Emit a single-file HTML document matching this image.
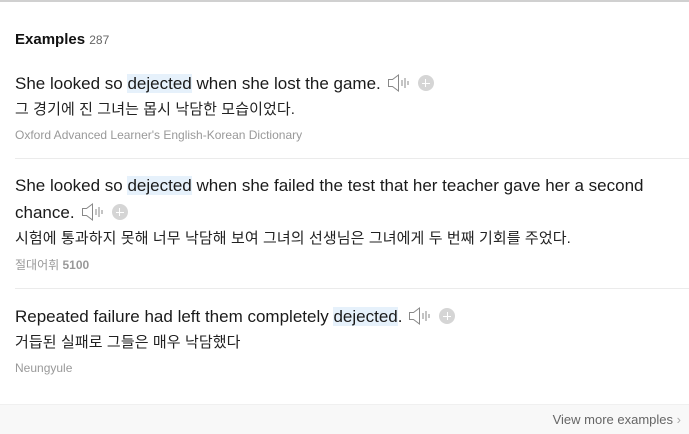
<!DOCTYPE html>
<html><head><meta charset="utf-8"><style>
*{margin:0;padding:0;box-sizing:border-box}
body{width:689px;height:434px;background:#fff;position:relative;overflow:hidden;font-family:"Liberation Sans","Noto Sans CJK KR",sans-serif;color:#111}
.t{position:absolute;left:15px;white-space:nowrap}
.en{font-size:17px;line-height:20px;color:#1a1a1a}
.ko{font-size:15px;line-height:20px;color:#222;letter-spacing:0.1px}
.src{font-size:12px;line-height:16px;color:#999}
.hl{background:#e6f1fb}
.hr{position:absolute;left:15px;right:0;height:1px;background:#ebebeb}
.ic{display:inline-block;vertical-align:-3px;margin-left:5px}
.plus{display:inline-block;width:16px;height:16px;border-radius:50%;background:#d5d5d5;vertical-align:-2px;margin-left:8px;position:relative}
.plus:before{content:"";position:absolute;left:4px;top:7.5px;width:8px;height:1px;background:#fff}
.plus:after{content:"";position:absolute;left:7.5px;top:4px;width:1px;height:8px;background:#fff}
</style></head><body>
<div style="position:absolute;left:0;right:0;top:0;height:2px;background:#d0d0d0"></div>
<div class="t" style="top:31px;font-size:15px;line-height:18px;font-weight:bold;color:#111">Examples <span style="font-weight:normal;font-size:12px;color:#666">287</span></div>

<div class="t en" style="top:74px">She looked so <span class="hl">dejected</span> when she lost the game.<svg class="ic" width="24" height="18" viewBox="0 0 24 18"><path d="M2.5 5.5h4l6-4.5v16l-6-4.5h-4z" fill="none" stroke="#888" stroke-width="1"/><path d="M16 6v6M19 4v10M22 7v4" stroke="#888" stroke-width="1"/></svg><span class="plus"></span></div>
<div class="t ko" style="top:100px">그 경기에 진 그녀는 몹시 낙담한 모습이었다.</div>
<div class="t src" style="top:127px">Oxford Advanced Learner's English-Korean Dictionary</div>
<div class="hr" style="top:158px"></div>

<div class="t en" style="top:176px">She looked so <span class="hl">dejected</span> when she failed the test that her teacher gave her a second</div>
<div class="t en" style="top:203px">chance.<svg class="ic" width="24" height="18" viewBox="0 0 24 18"><path d="M2.5 5.5h4l6-4.5v16l-6-4.5h-4z" fill="none" stroke="#888" stroke-width="1"/><path d="M16 6v6M19 4v10M22 7v4" stroke="#888" stroke-width="1"/></svg><span class="plus"></span></div>
<div class="t ko" style="top:229px">시험에 통과하지 못해 너무 낙담해 보여 그녀의 선생님은 그녀에게 두 번째 기회를 주었다.</div>
<div class="t src" style="top:257px">절대어휘 <b>5100</b></div>
<div class="hr" style="top:288px"></div>

<div class="t en" style="top:307px">Repeated failure had left them completely <span class="hl">dejected</span>.<svg class="ic" width="24" height="18" viewBox="0 0 24 18"><path d="M2.5 5.5h4l6-4.5v16l-6-4.5h-4z" fill="none" stroke="#888" stroke-width="1"/><path d="M16 6v6M19 4v10M22 7v4" stroke="#888" stroke-width="1"/></svg><span class="plus"></span></div>
<div class="t ko" style="top:333px">거듭된 실패로 그들은 매우 낙담했다</div>
<div class="t src" style="top:360px">Neungyule</div>

<div style="position:absolute;left:0;right:0;top:404px;bottom:0;background:#f8f8f8;border-top:1px solid #f0f0f0"></div>
<div style="position:absolute;right:8px;top:412px;font-size:13px;line-height:16px;color:#666">View more examples <span style="color:#aaa">›</span></div>
</body></html>
